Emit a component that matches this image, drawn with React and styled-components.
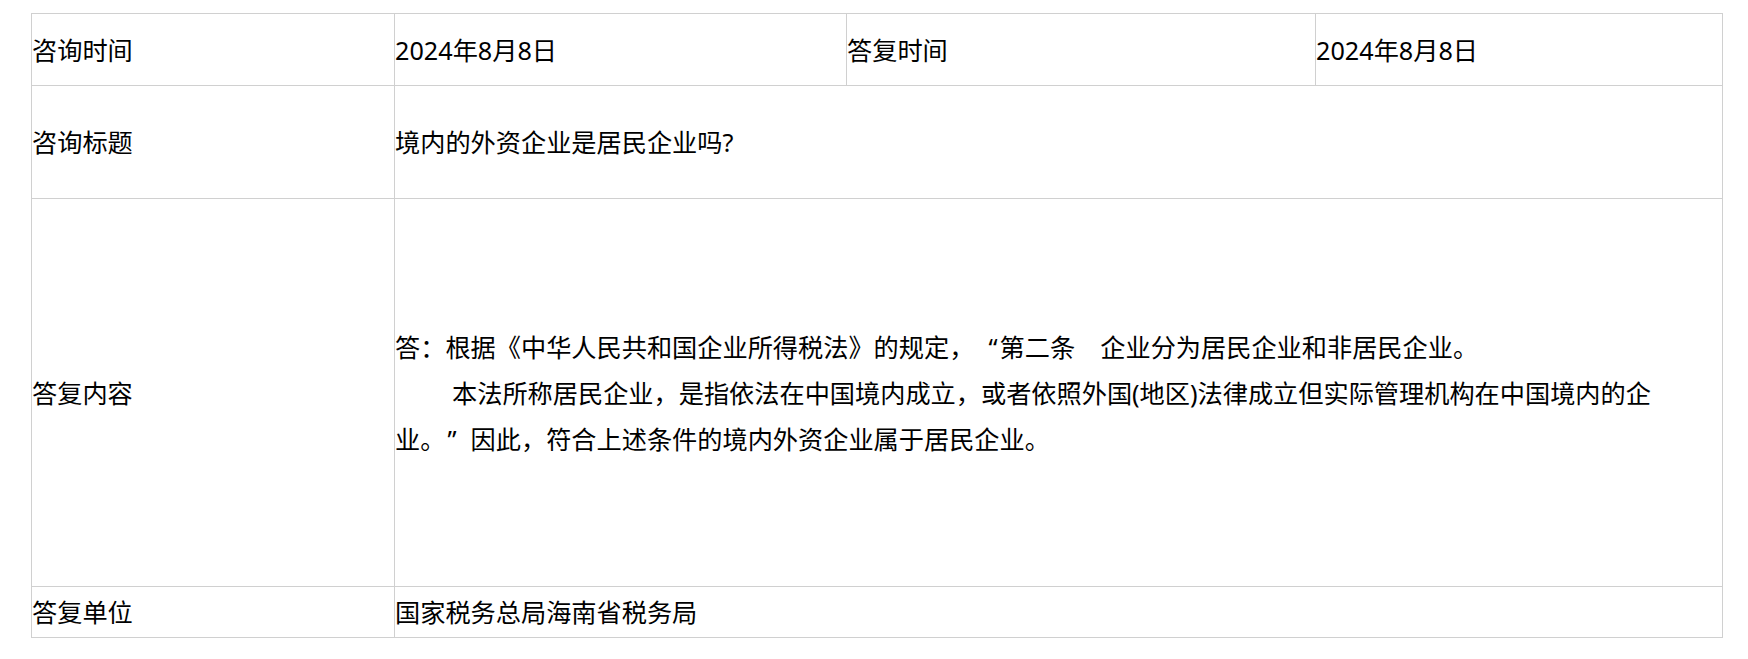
import styled, { createGlobalStyle } from "styled-components";

const GlobalStyle = createGlobalStyle`
  html, body {
    margin: 0;
    padding: 0;
    background: #fff;
  }
  body {
    font-family: "Noto Sans", "Noto Sans CJK SC", "Microsoft YaHei", sans-serif;
    color: #000;
  }
`;

const Page = styled.div`
  padding: 13px 0 0 31px;
`;

// 表格：四列，首行四格，其余行第二格跨三列
const Sheet = styled.div`
  display: grid;
  grid-template-columns: 363px 452px 469px 407px;
  grid-template-rows: 72px 113px 388px 51px;
  width: max-content;
  border-top: 1px solid #d0d0d0;
  border-left: 1px solid #d0d0d0;
`;

const Cell = styled.div`
  grid-column: ${(p) => (p.$wide ? "2 / 5" : "auto")};
  display: flex;
  align-items: center;
  border-right: 1px solid #d0d0d0;
  border-bottom: 1px solid #d0d0d0;
  font-size: 25.2px;
  line-height: 46px;
  white-space: nowrap;
`;

const Answer = styled.div`
  display: flex;
  flex-direction: column;
`;

const Para = styled.p`
  margin: 0;
  text-indent: ${(p) => (p.$indent ? "57px" : "0")};
`;

// 全角引号：占一个字宽，开引号靠右、闭引号靠左
const Quote = styled.span`
  display: inline-block;
  width: 1em;
  text-indent: 0;
  text-align: ${(p) => (p.$open ? "right" : "left")};
  padding: ${(p) => (p.$open ? "0 2px 0 0" : "0 0 0 2px")};
  box-sizing: border-box;
`;

export default function App() {
  return (
    <>
      <GlobalStyle />
      <Page>
        <Sheet>
          <Cell>咨询时间</Cell>
          <Cell>2024年8月8日</Cell>
          <Cell>答复时间</Cell>
          <Cell>2024年8月8日</Cell>

          <Cell>咨询标题</Cell>
          <Cell $wide>境内的外资企业是居民企业吗?</Cell>

          <Cell>答复内容</Cell>
          <Cell $wide>
            <Answer>
              <Para>
                答：根据《中华人民共和国企业所得税法》的规定，<Quote $open>“</Quote>第二条　企业分为居民企业和非居民企业。
              </Para>
              <Para $indent>
                本法所称居民企业，是指依法在中国境内成立，或者依照外国(地区)法律成立但实际管理机构在中国境内的企
                <br />
                业。<Quote>”</Quote>因此，符合上述条件的境内外资企业属于居民企业。
              </Para>
            </Answer>
          </Cell>

          <Cell>答复单位</Cell>
          <Cell $wide>国家税务总局海南省税务局</Cell>
        </Sheet>
      </Page>
    </>
  );
}
